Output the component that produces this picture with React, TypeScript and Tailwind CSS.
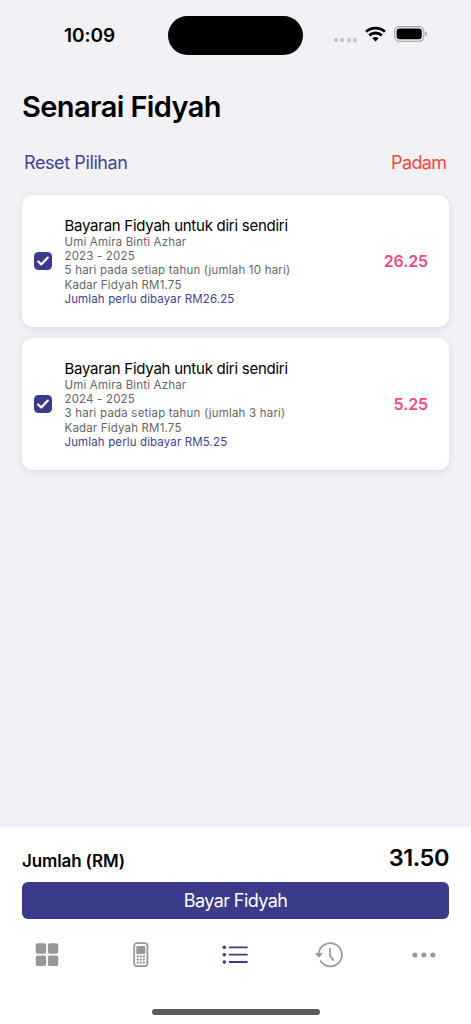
type Payment = {
  name: string;
  years: string;
  days: string;
  rate: string;
  due: string;
  amount: string;
};

const payments: Payment[] = [
  {
    name: "Umi Amira Binti Azhar",
    years: "2023 - 2025",
    days: "5 hari pada setiap tahun (jumlah 10 hari)",
    rate: "Kadar Fidyah RM1.75",
    due: "Jumlah perlu dibayar RM26.25",
    amount: "26.25",
  },
  {
    name: "Umi Amira Binti Azhar",
    years: "2024 - 2025",
    days: "3 hari pada setiap tahun (jumlah 3 hari)",
    rate: "Kadar Fidyah RM1.75",
    due: "Jumlah perlu dibayar RM5.25",
    amount: "5.25",
  },
];

function StatusBar() {
  return (
    <div className="flex h-[70px] shrink-0 items-center">
      <div className="ml-16 w-[104px] text-[19px] font-semibold leading-none tracking-[-0.05px]">
        10:09
      </div>
      <div className="h-[39px] w-[135px] rounded-full bg-black" />
      <div className="ml-[31px] mt-[9px] flex gap-[2.4px]">
        <span className="size-1 rounded-[1.5px] bg-[#c3c3c8]" />
        <span className="size-1 rounded-[1.5px] bg-[#c3c3c8]" />
        <span className="size-1 rounded-[1.5px] bg-[#c3c3c8]" />
        <span className="size-1 rounded-[1.5px] bg-[#c3c3c8]" />
      </div>
      <svg className="ml-[8px] mt-[-2px]" width="21" height="16" viewBox="0 0 21 16" fill="none" stroke="#000" strokeWidth="2.9">
        <path d="M1.1 5.7C6.3 .9 14.7 .9 19.9 5.7" />
        <path d="M4.3 9.4C7.7 6.2 13.3 6.2 16.7 9.4" />
        <path d="M7.3 12.2C9.1 10.5 11.9 10.5 13.7 12.2L10.5 15.4Z" fill="#000" stroke="none" />
      </svg>
      <svg className="ml-[7.5px] mt-[-2px]" width="34" height="16" viewBox="0 0 34 16">
        <rect x="0.6" y="0.6" width="29.2" height="14.6" rx="4.6" fill="none" stroke="#a0a0a3" strokeWidth="1.1" />
        <rect x="2.6" y="2.6" width="25.2" height="10.6" rx="3" fill="#000" />
        <path d="M31.2 5.5C33.5 6.2 33.5 9.6 31.2 10.3Z" fill="#a0a0a3" />
      </svg>
    </div>
  );
}

function PaymentCard({ payment }: { payment: Payment }) {
  return (
    <article className="flex h-[132px] items-center rounded-[11px] bg-white pl-3 pr-[21px] shadow-[0_2px_9px_rgba(40,40,70,0.11)]">
      <svg width="18" height="18" viewBox="0 0 18 18">
        <rect width="18" height="18" rx="4.6" fill="#3a3b8b" />
        <path d="M4.2 9.5 7.2 12.4 13.8 5.6" fill="none" stroke="#fff" strokeWidth="2.2" strokeLinecap="round" strokeLinejoin="round" />
      </svg>
      <div className="ml-[12.5px] flex-1 whitespace-nowrap pt-px text-[11.5px] leading-[14.3px] tracking-[0.17px] text-[#666]">
        <h2 className="text-[15px] leading-[18px] tracking-[-0.26px] text-black">Bayaran Fidyah untuk diri sendiri</h2>
        <p>{payment.name}</p>
        <p>{payment.years}</p>
        <p className="tracking-[0.2px]">{payment.days}</p>
        <p>{payment.rate}</p>
        <p className="tracking-[0.13px] text-[#41429a]">{payment.due}</p>
      </div>
      <div className="text-[16px] font-semibold leading-5 tracking-[-0.1px] text-[#f94785]">{payment.amount}</div>
    </article>
  );
}

function TabBar() {
  return (
    <nav className="mt-[18px] flex h-9 items-center justify-around text-[#979797]">
      <svg width="30" height="30" viewBox="0 0 30 30" fill="currentColor">
        <rect x="3.7" y="3.2" width="10.4" height="10.6" rx="2" />
        <rect x="15.9" y="3.2" width="10.4" height="10.6" rx="2" />
        <rect x="3.7" y="15.4" width="10.4" height="10.6" rx="2" />
        <rect x="15.9" y="15.4" width="10.4" height="10.6" rx="2" />
      </svg>
      <svg width="30" height="30" viewBox="0 0 30 30" fill="currentColor">
        <rect x="8.2" y="3.1" width="13.2" height="23" rx="2.8" fill="none" stroke="currentColor" strokeWidth="1.8" />
        <rect x="10.3" y="5.9" width="9" height="8" rx="1" />
        {[16.4, 19.5, 22.6].map((y) =>
          [11.8, 14.8, 17.8].map((x) => <rect key={`${x}-${y}`} x={x - 1.1} y={y - 1.1} width="2.2" height="2.2" rx="0.7" />)
        )}
      </svg>
      <svg className="text-[#3a3b8b]" width="30" height="30" viewBox="0 0 30 30" fill="currentColor">
        {[7.3, 14.7, 22].map((y) => (
          <g key={y}>
            <circle cx="4.3" cy={y} r="1.8" />
            <rect x="8.8" y={y - 0.9} width="19" height="1.8" rx="0.9" />
          </g>
        ))}
      </svg>
      <svg width="30" height="30" viewBox="0 0 30 30" fill="none" stroke="currentColor" strokeWidth="1.7" strokeLinecap="round" strokeLinejoin="round">
        <path d="M3.8 13.1A11.6 11.6 0 1 1 5.5 21" />
        <path d="M1 13.4h6L4 17Z" fill="currentColor" strokeWidth="1" />
        <path d="M15 8.5v7.2l3.2 4.4" />
      </svg>
      <svg width="30" height="30" viewBox="0 0 30 30" fill="currentColor">
        <circle cx="5.9" cy="15" r="2.5" />
        <circle cx="14.9" cy="15" r="2.5" />
        <circle cx="23.9" cy="15" r="2.5" />
      </svg>
    </nav>
  );
}

export default function App() {
  return (
    <div className="flex h-screen w-full flex-col overflow-hidden bg-[#f2f1f6] font-['Inter',sans-serif] text-black">
      <StatusBar />
      <main className="flex-1 px-[22px]">
        <h1 className="mt-[19px] text-[29px] font-semibold leading-9 tracking-[-0.6px]">Senarai Fidyah</h1>
        <div className="mt-[26px] flex justify-between pl-[2px] pr-[2.5px] text-[18px] leading-6 tracking-[-0.4px]">
          <button className="text-[#41429a]">Reset Pilihan</button>
          <button className="tracking-[-0.6px] text-[#fb443a]">Padam</button>
        </div>
        <div className="mt-5 flex flex-col gap-[11px]">
          {payments.map((payment) => (
            <PaymentCard key={payment.years} payment={payment} />
          ))}
        </div>
      </main>
      <footer className="h-[197px] shrink-0 bg-white">
        <div className="px-[22px] pt-4">
          <div className="flex h-[39px] items-start justify-between font-semibold">
            <span className="pt-1 text-[17px] leading-7 tracking-[-0.13px]">Jumlah (RM)</span>
            <span className="text-[23.5px] leading-[30px] tracking-[-0.45px]">31.50</span>
          </div>
          <button className="h-[37px] w-full rounded-md bg-[#3a3b8b] text-[18px] tracking-[-0.58px] text-white">Bayar Fidyah</button>
        </div>
        <TabBar />
        <div className="mx-auto mt-[36px] h-[5.5px] w-[168px] rounded-full bg-[#5c5c5c]" />
      </footer>
    </div>
  );
}
